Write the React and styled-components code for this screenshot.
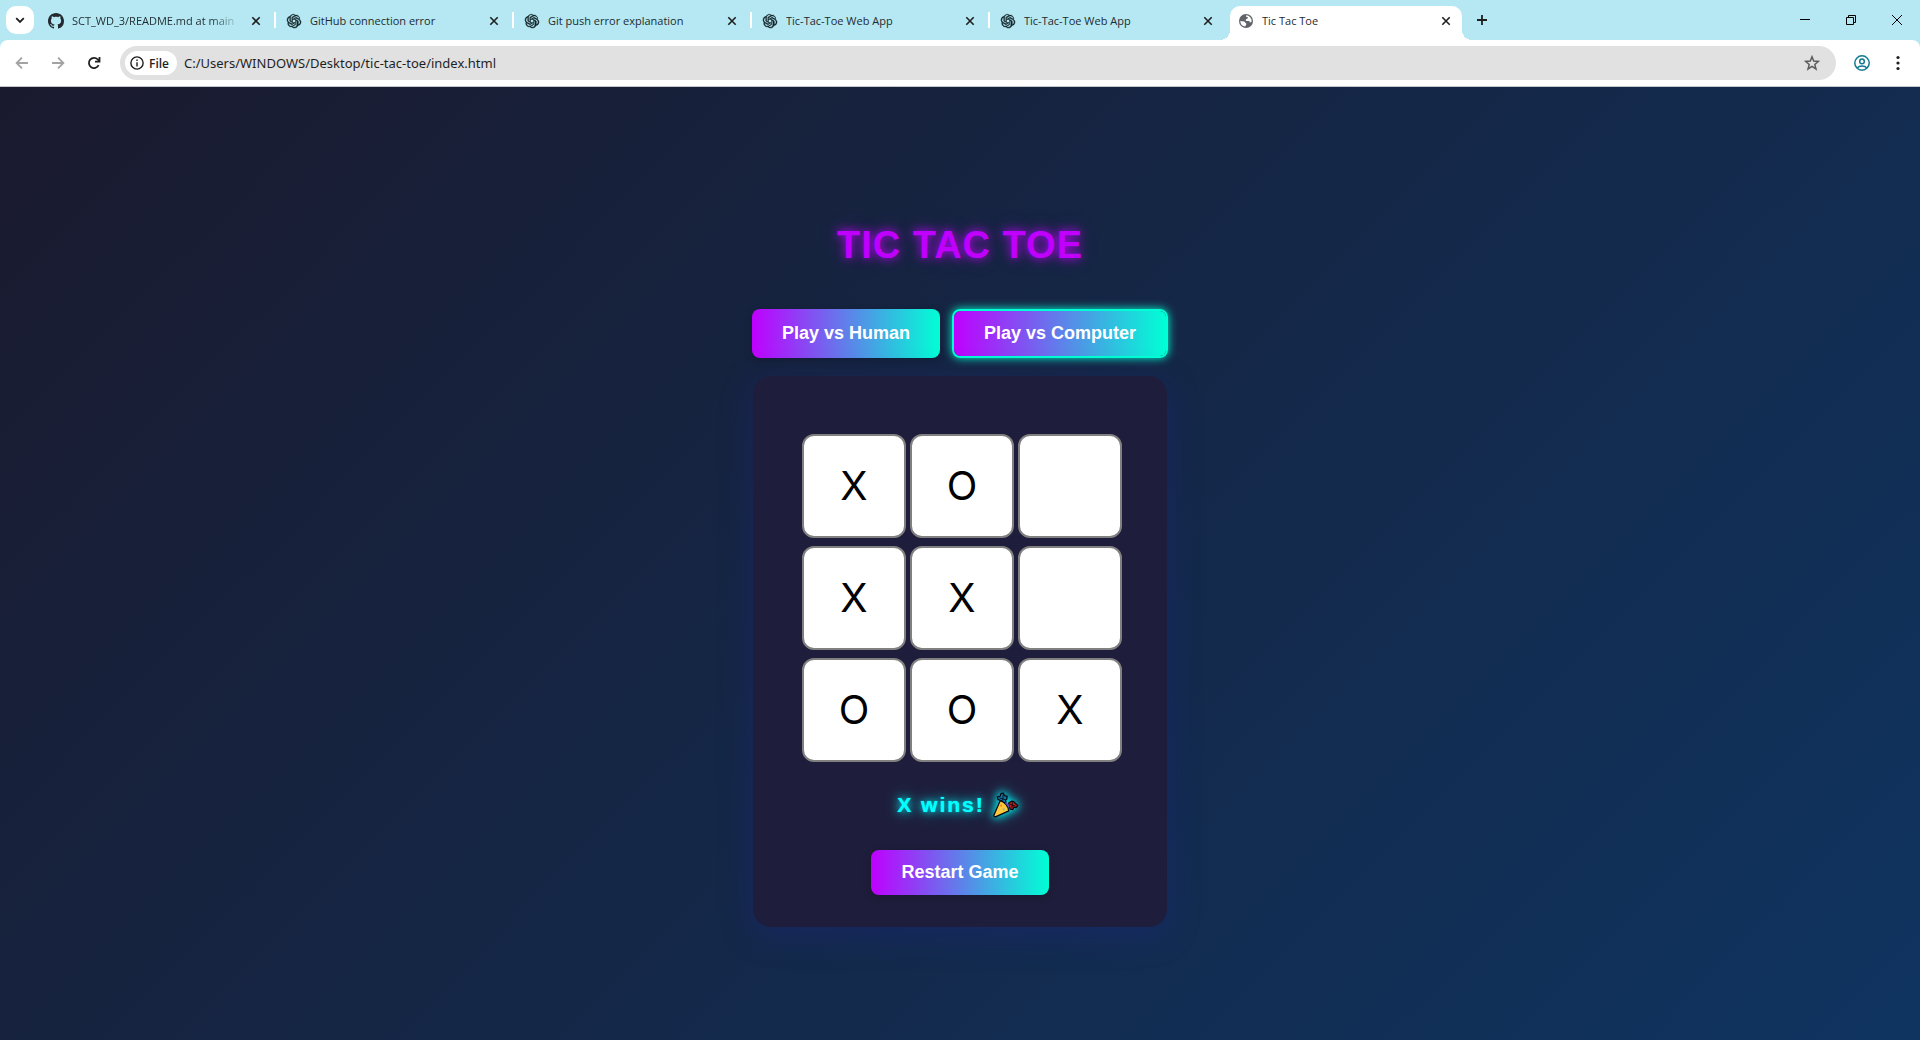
import React, { useState } from "react";
import styled, { createGlobalStyle, css } from "styled-components";

const UI_FONT = `"Open Sans", "Noto Sans", sans-serif`;
const ARIAL = `"Liberation Sans", Arial, sans-serif`;
const MARK_FONT = `Inter, "DejaVu Sans", sans-serif`;

const GlobalStyle = createGlobalStyle`
  *, *::before, *::after { box-sizing: border-box; }
  body { margin: 0; font-family: ${UI_FONT}; }
  button, input { font-family: inherit; }
`;

const Window = styled.div`
  display: flex;
  flex-direction: column;
  min-height: 100vh;
`;

const TabStrip = styled.div`
  display: flex;
  align-items: flex-end;
  height: 40px;
  padding-left: 6px;
  background: #b5e8f2;
`;

const IconButton = styled.button`
  display: flex;
  align-items: center;
  justify-content: center;
  flex: none;
  width: ${(p) => p.$w || 36}px;
  height: ${(p) => p.$h || 34}px;
  padding: 0;
  border: 0;
  background: none;
  color: ${(p) => p.$color || "#1f1f1f"};
`;

const TabSearch = styled(IconButton)`
  align-self: center;
  margin-right: 6px;
  border-radius: 10px;
  background: #fff;
`;

const TabList = styled.div`
  display: flex;
  gap: 6px;
`;

const Tab = styled.div`
  position: relative;
  display: flex;
  align-items: center;
  width: 232px;
  height: 34px;
  padding: 0 7px 4px 8px;
  color: #1f2b30;
  ${(p) =>
    p.$divided &&
    css`
      &::after {
        content: "";
        position: absolute;
        right: -4px;
        top: 6px;
        width: 2px;
        height: 16px;
        background: #fff;
      }
    `}
  ${(p) =>
    p.$active &&
    css`
      border-radius: 10px 10px 0 0;
      background: #fff;
      &::before,
      &::after {
        content: "";
        position: absolute;
        bottom: 0;
        width: 10px;
        height: 10px;
      }
      &::before {
        left: -10px;
        background: radial-gradient(circle at 0 0, transparent 10px, #fff 10px);
      }
      &::after {
        right: -10px;
        background: radial-gradient(circle at 100% 0, transparent 10px, #fff 10px);
      }
    `}
`;

const TabTitle = styled.span`
  flex: 1;
  min-width: 0;
  margin: 0 6px 0 8px;
  overflow: hidden;
  white-space: nowrap;
  font-size: 11px;
  line-height: 20px;
  ${(p) => p.$fade && css`mask-image: linear-gradient(to right, #000 82%, transparent);`}
`;

const WindowControls = styled.div`
  display: flex;
  margin-left: auto;
  align-self: flex-start;
`;

const Toolbar = styled.div`
  display: flex;
  align-items: center;
  height: 47px;
  padding: 0 4px;
  border-bottom: 1px solid #c4c6ca;
  background: linear-gradient(#b5e8f2, #b5e8f2) top / 100% 8px no-repeat;
  isolation: isolate;
  position: relative;
  &::before {
    content: "";
    position: absolute;
    inset: 0;
    z-index: -1;
    border-radius: 8px 8px 0 0;
    background: #fff;
  }
`;

const AddressBar = styled.form`
  display: flex;
  align-items: center;
  flex: 1;
  height: 34px;
  margin: 0 8px;
  padding: 0 6px 0 5px;
  border-radius: 17px;
  background: #e1e1e1;
`;

const FileChip = styled.button`
  display: flex;
  align-items: center;
  gap: 5px;
  height: 24px;
  padding: 0 8px 0 5px;
  border: 0;
  border-radius: 12px;
  background: #fff;
  color: #1f1f1f;
  font-size: 12px;
  font-weight: 600;
`;

const UrlInput = styled.input`
  flex: 1;
  min-width: 0;
  margin-left: 7px;
  padding: 0;
  border: 0;
  outline: 0;
  background: none;
  color: #1f1f1f;
  font-family: "Noto Sans", sans-serif;
  font-size: 13px;
  line-height: 20px;
`;

const Page = styled.main`
  display: flex;
  flex: 1;
  flex-direction: column;
  align-items: center;
  justify-content: center;
  padding-top: 22px;
  background: linear-gradient(135deg, #1a1a2e, #0f3460);
  font-family: ${ARIAL};
`;

const Title = styled.h1`
  margin: 0 0 42px;
  color: #bf00ff;
  font-size: 38px;
  line-height: 44px;
  letter-spacing: 1px;
  text-shadow: 0 0 10px #bf00ff, 0 0 20px rgba(191, 0, 255, 0.3);
`;

const Modes = styled.div`
  display: flex;
  gap: 12px;
  margin-bottom: 18px;
`;

const GameButton = styled.button`
  padding: 12px 30px;
  border: ${(p) => (p.$selected ? "2px solid #00ffd5" : "0")};
  border-radius: 8px;
  background: linear-gradient(90deg, #bf00ff, #00ffd5) padding-box;
  color: #fff;
  font-family: ${ARIAL};
  font-size: 18px;
  font-weight: 700;
  line-height: 21px;
  box-shadow: ${(p) => (p.$selected ? "0 0 10px #00ffd5" : "0 2px 8px rgba(0, 0, 0, 0.2)")};
`;

const Card = styled.section`
  display: flex;
  flex-direction: column;
  align-items: center;
  padding: 58px 45px 32px 49px;
  border-radius: 18px;
  background: #1e1e3c;
  box-shadow: 0 8px 32px rgba(31, 38, 135, 0.37);
`;

const Board = styled.div`
  display: grid;
  grid-template-columns: repeat(3, 104px);
  gap: 8px 4px;
`;

const Cell = styled.button`
  height: 104px;
  padding: 0;
  border: 2px solid #808080;
  border-radius: 12px;
  background: #fff;
  color: #000;
  font-family: ${MARK_FONT};
  font-size: 40px;
  line-height: 48px;
`;

const Result = styled.div`
  display: flex;
  flex-direction: column;
  align-items: center;
  gap: 29px;
  margin: 27px 4px 0 0;
`;

const Status = styled.p`
  display: flex;
  align-items: center;
  gap: 8px;
  margin: 0;
  padding-right: 4px;
  color: #00ffff;
  font-size: 21px;
  font-weight: 700;
  line-height: 32px;
  letter-spacing: 2px;
  text-shadow: 0 0 1px #00ffff, 0 0 8px #00ffff, 0 0 16px rgba(0, 255, 255, 0.5);
  svg { filter: drop-shadow(0 0 4px #00ffff) drop-shadow(0 0 6px rgba(0, 255, 255, 0.5)); }
`;

const CloseIcon = () => (
  <svg width="10" height="10" viewBox="0 0 10 10" fill="none" stroke="currentColor" strokeWidth="1.6">
    <path d="M1.3 1.3l7.4 7.4M8.7 1.3L1.3 8.7" />
  </svg>
);

const GithubIcon = () => (
  <svg width="16" height="16" viewBox="0 0 16 16" fill="#24292f">
    <path d="M8 0C3.58 0 0 3.58 0 8c0 3.54 2.29 6.53 5.47 7.59.4.07.55-.17.55-.38 0-.19-.01-.82-.01-1.49-2.01.37-2.53-.49-2.69-.94-.09-.23-.48-.94-.82-1.13-.28-.15-.68-.52-.01-.53.63-.01 1.08.58 1.23.82.72 1.21 1.87.87 2.33.66.07-.52.28-.87.51-1.07-1.78-.2-3.64-.89-3.64-3.95 0-.87.31-1.59.82-2.15-.08-.2-.36-1.02.08-2.12 0 0 .67-.21 2.2.82.64-.18 1.32-.27 2-.27s1.36.09 2 .27c1.53-1.04 2.2-.82 2.2-.82.44 1.1.16 1.92.08 2.12.51.56.82 1.27.82 2.15 0 3.07-1.87 3.75-3.65 3.95.29.25.54.73.54 1.48 0 1.07-.01 1.93-.01 2.2 0 .21.15.46.55.38A8.01 8.01 0 0 0 16 8c0-4.42-3.58-8-8-8z" />
  </svg>
);

const KnotIcon = () => (
  <svg width="16" height="16" viewBox="-1.5 -1.5 27 27" fill="#14262b" stroke="#14262b" strokeWidth="0.7">
    <path d="M21.28 9.82a5.98 5.98 0 0 0-.52-4.91 6.05 6.05 0 0 0-6.51-2.9A6.07 6.07 0 0 0 4.98 4.18a5.98 5.98 0 0 0-4 2.9 6.05 6.05 0 0 0 .75 7.1 5.98 5.98 0 0 0 .51 4.91 6.05 6.05 0 0 0 6.51 2.9A5.98 5.98 0 0 0 13.26 24a6.06 6.06 0 0 0 5.77-4.21 5.99 5.99 0 0 0 4-2.9 6.06 6.06 0 0 0-.75-7.07zm-9.02 12.61a4.48 4.48 0 0 1-2.88-1.04l.14-.08 4.78-2.76a.79.79 0 0 0 .39-.68v-6.74l2.02 1.17a.07.07 0 0 1 .04.05v5.58a4.5 4.5 0 0 1-4.49 4.5zM3.6 18.3a4.47 4.47 0 0 1-.54-3.01l.14.09 4.78 2.76a.77.77 0 0 0 .78 0l5.84-3.37v2.33a.08.08 0 0 1-.03.06L9.74 19.95a4.5 4.5 0 0 1-6.14-1.65zM2.34 7.9a4.49 4.49 0 0 1 2.37-1.98v5.68a.77.77 0 0 0 .39.68l5.81 3.35-2.02 1.17a.08.08 0 0 1-.07 0l-4.83-2.79A4.5 4.5 0 0 1 2.34 7.87zm16.6 3.86l-5.84-3.39 2.02-1.16a.08.08 0 0 1 .07 0l4.83 2.79a4.49 4.49 0 0 1-.68 8.1v-5.68a.79.79 0 0 0-.4-.66zm2.01-3.03l-.14-.09-4.77-2.78a.78.78 0 0 0-.79 0L9.41 9.23V6.9a.07.07 0 0 1 .03-.06l4.83-2.79a4.5 4.5 0 0 1 6.68 4.66zM8.31 12.86l-2.02-1.16a.08.08 0 0 1-.04-.06V6.07a4.5 4.5 0 0 1 7.38-3.45l-.14.08-4.78 2.76a.79.79 0 0 0-.39.68zm1.1-2.36L12 9l2.61 1.5v3L12 15l-2.6-1.5z" />
  </svg>
);

const GlobeIcon = () => (
  <svg width="16" height="16" viewBox="0 0 16 16">
    <circle cx="8" cy="8" r="7" fill="#5f6368" />
    <path d="M8.2 2.3c-.6.9-.2 1.6.9 1.7 1 .1 1 .9.4 1.6-.5.6-1.4.4-1.7 1.2-.3.9.4 1.2 1.4 1.2h1.4c.9 0 1.2.7 1.1 1.4 1 .1 1.7-.2 2-1.1A5.7 5.7 0 0 0 8.2 2.3zM2.3 8c1.3.1 2.6.3 3.8.6.9.3 1 1.2 1.7 1.6.7.4.9.9.3 1.5-.5.5-.5 1.2-.7 1.9A5.7 5.7 0 0 1 2.3 8z" fill="#fff" />
  </svg>
);

const PartyPopper = () => (
  <svg width="26" height="26" viewBox="0 0 24 24" role="img" aria-label="party popper" stroke="#090b12" strokeLinejoin="round">
    <path d="M4.5 6.8L4 4.4l2.700-.6L7.300 1.500 9.500 1l1 2.300 2.500.5-.2 2.600-1.200 1 .4 2-2.200 1L8 8.500z" fill="#0f78a8" strokeWidth="1.2" />
    <path d="M9.5 1.5L9 8M6 5.5l5 1.500" fill="none" strokeWidth="0.8" />
    <path d="M15 13l-.5-2.800 2.500-1.700 2.300.4 1.700 2 1.900 1.600-1.300 1.800-2.300-.3-1 2.200-2.500-.4z" fill="#b91f16" strokeWidth="1.2" />
    <path d="M16 11.500l4.500 1.500M18 9.500l-.5 5" fill="none" strokeWidth="0.8" />
    <path d="M6.600 8L1 21c-.5 1.300.3 2.200 1.700 1.700l11.900-5.200c-.6-4.300-3.800-8-8-9.500z" fill="#ffc83d" strokeWidth="1.2" />
    <path d="M11.500 9.800c1.500 1 2.700 2.400 3.400 4" fill="none" stroke="#5f4bbd" strokeWidth="1.600" />
    <circle cx="9.800" cy="16" r="1" fill="#5fd0a5" stroke="none" />
    <circle cx="7.500" cy="12.500" r="1.100" fill="#f59420" stroke="none" />
  </svg>
);

const TABS = [
  { title: "SCT_WD_3/README.md at main", icon: GithubIcon, fade: true },
  { title: "GitHub connection error", icon: KnotIcon },
  { title: "Git push error explanation", icon: KnotIcon },
  { title: "Tic-Tac-Toe Web App", icon: KnotIcon },
  { title: "Tic-Tac-Toe Web App", icon: KnotIcon },
  { title: "Tic Tac Toe", icon: GlobeIcon, active: true },
];

const Line = ({ size = 16, width = 1.8, children }) => (
  <svg width={size} height={size} viewBox="0 0 16 16" fill="none" stroke="currentColor" strokeWidth={width}>
    {children}
  </svg>
);

function BrowserChrome() {
  return (
    <header>
      <TabStrip>
        <TabSearch $w={28} $h={28} aria-label="Search tabs">
          <Line><path d="M4.2 6.2L8 10l3.8-3.8" /></Line>
        </TabSearch>
        <TabList>
          {TABS.map(({ title, icon: Icon, active, fade }, i) => (
            <Tab key={i} $active={active} $divided={i < 4}>
              <Icon />
              <TabTitle $fade={fade}>{title}</TabTitle>
              <IconButton $w={18} $h={18} aria-label="Close tab"><CloseIcon /></IconButton>
            </Tab>
          ))}
        </TabList>
        <IconButton $w={40} $h={40} aria-label="New tab">
          <Line><path d="M8 3v10M3 8h10" /></Line>
        </IconButton>
        <WindowControls>
          <IconButton $w={46} $h={40} $color="#000" aria-label="Minimize">
            <svg width="10" height="10" fill="currentColor"><path d="M0 4h10v1H0z" /></svg>
          </IconButton>
          <IconButton $w={46} $h={40} $color="#000" aria-label="Restore">
            <svg width="10" height="10" fill="none" stroke="currentColor">
              <path d="M.5 2.5h7v7h-7zM2.5 2.5v-2h7v7h-2" />
            </svg>
          </IconButton>
          <IconButton $w={46} $h={40} $color="#000" aria-label="Close">
            <svg width="10" height="10" stroke="currentColor"><path d="M0 0l10 10M10 0L0 10" /></svg>
          </IconButton>
        </WindowControls>
      </TabStrip>
      <Toolbar>
        <IconButton $color="#a3a3a3" aria-label="Back">
          <Line><path d="M14 8H3M8 2.6L2.6 8 8 13.4" /></Line>
        </IconButton>
        <IconButton $color="#a3a3a3" aria-label="Forward">
          <Line><path d="M2 8h11M8 2.6L13.4 8 8 13.4" /></Line>
        </IconButton>
        <IconButton aria-label="Reload">
          <Line><path d="M12.6 10.2A5.1 5.1 0 1 1 11.8 4.5L13.5 6.2M13.5 2v4.6H9" /></Line>
        </IconButton>
        <AddressBar onSubmit={(e) => e.preventDefault()}>
          <FileChip type="button">
            <Line size={14} width={1.6}>
              <circle cx="8" cy="8" r="7" />
              <path d="M8 7v5M8 4v1.8" />
            </Line>
            File
          </FileChip>
          <UrlInput aria-label="Address" defaultValue="C:/Users/WINDOWS/Desktop/tic-tac-toe/index.html" />
          <IconButton type="button" $color="#5c5c5c" aria-label="Bookmark this page">
            <Line width={1.5}>
              <path d="M8 1.8l1.7 4.3 4.7.3-3.6 3 1.2 4.6L8 11.4 4 14l1.2-4.6-3.6-3 4.7-.3z" />
            </Line>
          </IconButton>
        </AddressBar>
        <IconButton $color="#117a8f" aria-label="Profile">
          <Line width={1.5}>
            <circle cx="8" cy="8" r="7.2" />
            <circle cx="8" cy="6.4" r="2.3" />
            <path d="M3 13c2.5-2.6 7.5-2.6 10 0" />
          </Line>
        </IconButton>
        <IconButton aria-label="Menu">
          <svg width="16" height="16" fill="currentColor">
            <circle cx="8" cy="2.5" r="1.6" /><circle cx="8" cy="8" r="1.6" /><circle cx="8" cy="13.5" r="1.6" />
          </svg>
        </IconButton>
      </Toolbar>
    </header>
  );
}

const START = ["X", "O", "", "X", "X", "", "O", "O", "X"];

export default function App() {
  const [cells, setCells] = useState(START);
  const [versus, setVersus] = useState("Computer");
  return (
    <Window>
      <GlobalStyle />
      <BrowserChrome />
      <Page>
        <Title>TIC TAC TOE</Title>
        <Modes>
          {["Human", "Computer"].map((name) => (
            <GameButton key={name} $selected={versus === name} onClick={() => setVersus(name)}>
              Play vs {name}
            </GameButton>
          ))}
        </Modes>
        <Card>
          <Board>
            {cells.map((mark, i) => (
              <Cell key={i} aria-label={`Cell ${i + 1} ${mark}`}>{mark}</Cell>
            ))}
          </Board>
          <Result>
            <Status>X wins! <PartyPopper /></Status>
            <GameButton onClick={() => setCells(START)}>Restart Game</GameButton>
          </Result>
        </Card>
      </Page>
    </Window>
  );
}
